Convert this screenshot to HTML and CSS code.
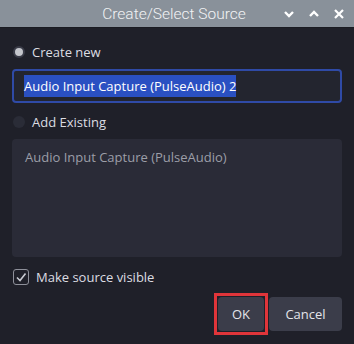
FILE: index.html
```html
<!DOCTYPE html>
<html lang="en">
<head>
    <meta charset="UTF-8">
    <meta name="viewport" content="width=device-width, initial-scale=1.0">
    <title>Create/Select Source</title>
    <link rel="stylesheet" href="styles.css">
</head>
<body>
    <div class="window">
        <header class="titlebar">
            <span class="title">Create/Select Source</span>
            <div class="controls">
                <svg width="12" height="10" viewBox="0 0 12 10"><path d="M2 3 L6 7 L10 3" fill="none" stroke="#fff" stroke-width="2.4"/></svg>
                <svg width="12" height="10" viewBox="0 0 12 10"><path d="M2 7 L6 3 L10 7" fill="none" stroke="#fff" stroke-width="2.4"/></svg>
                <svg width="12" height="10" viewBox="0 0 12 10"><path d="M2 1 L10 9 M10 1 L2 9" fill="none" stroke="#fff" stroke-width="2.2"/></svg>
            </div>
        </header>

        <main class="content">
            <label class="option">
                <span class="radio checked"></span>
                <span>Create new</span>
            </label>

            <div class="name-field">
                <span class="selected">Audio Input Capture (PulseAudio) 2</span>
            </div>

            <label class="option">
                <span class="radio"></span>
                <span>Add Existing</span>
            </label>

            <div class="existing-list">
                <div class="list-item">Audio Input Capture (PulseAudio)</div>
            </div>

            <label class="visible-row">
                <span class="checkbox">
                    <svg width="12" height="12" viewBox="0 0 12 12"><path d="M2 6.5 L5 9.5 L10.5 2.5" fill="none" stroke="#c8cad2" stroke-width="1.6"/></svg>
                </span>
                <span>Make source visible</span>
            </label>

            <div class="buttons">
                <div class="highlight">
                    <button class="btn ok">OK</button>
                </div>
                <button class="btn cancel">Cancel</button>
            </div>
        </main>
    </div>
</body>
</html>
```

FILE: styles.css
```css
body {
    margin: 0;
    background-color: #1f2029;
    font-family: "Open Sans", "DejaVu Sans", sans-serif;
    color: #dcdde2;
    overflow: hidden;
}

.window {
    width: 354px;
    height: 344px;
    display: flex;
    flex-direction: column;
}

.titlebar {
    height: 27px;
    background-color: #89919a;
    display: grid;
    grid-template-columns: 1fr auto 1fr;
    align-items: center;
    border-bottom: 1px solid #1a1b22;
}

.title {
    grid-column: 2;
    font-family: Roboto, "DejaVu Sans", sans-serif;
    font-weight: 300;
    font-size: 15.5px;
    color: #f2f3f5;
    margin-left: -6px;
}

.controls {
    grid-column: 3;
    justify-self: end;
    display: flex;
    gap: 13px;
    padding-right: 9px;
}

.content {
    flex: 1;
    padding: 13px 12px 0 12px;
    display: flex;
    flex-direction: column;
}

.option {
    display: flex;
    align-items: center;
    gap: 7px;
    height: 22px;
    padding-left: 1px;
    font-size: 13px;
}

.radio {
    width: 12px;
    height: 12px;
    border-radius: 50%;
    background-color: #2a2c37;
    box-sizing: border-box;
}

.radio.checked {
    border: 2px solid #3a3c48;
    background-color: #c4c6cc;
}

.name-field {
    margin-top: 6px;
    height: 34px;
    box-sizing: border-box;
    border: 2px solid #2f4aa6;
    border-radius: 4px;
    background-color: #23252f;
    display: flex;
    align-items: center;
    padding-left: 10px;
    font-size: 13px;
}

.selected {
    background-color: #2a50c2;
    color: #ffffff;
    padding: 2px 0;
}

.name-field + .option {
    margin-top: 8px;
}

.existing-list {
    margin-top: 6px;
    height: 118px;
    background-color: #2a2b37;
    border-radius: 4px;
}

.list-item {
    padding: 9px 13px;
    font-size: 13px;
    color: #9c9ea8;
}

.visible-row {
    margin-top: 12px;
    display: flex;
    align-items: center;
    gap: 7px;
    height: 16px;
    padding-left: 1px;
    font-size: 13px;
}

.checkbox {
    width: 16px;
    height: 16px;
    box-sizing: border-box;
    border: 1px solid #8e909a;
    border-radius: 3px;
    display: flex;
    align-items: center;
    justify-content: center;
}

.buttons {
    margin-top: 8px;
    display: flex;
    justify-content: flex-end;
    align-items: center;
}

.highlight {
    border: 3px solid #e0353a;
    padding: 1px;
    margin-right: 1px;
}

.btn {
    font-family: "Open Sans", "DejaVu Sans", sans-serif;
    font-size: 13px;
    color: #e4e5ea;
    background-color: #3b3d4a;
    border: none;
    border-radius: 4px;
    height: 34px;
    cursor: pointer;
}

.ok {
    width: 46px;
    display: block;
}

.cancel {
    width: 73px;
}
```
